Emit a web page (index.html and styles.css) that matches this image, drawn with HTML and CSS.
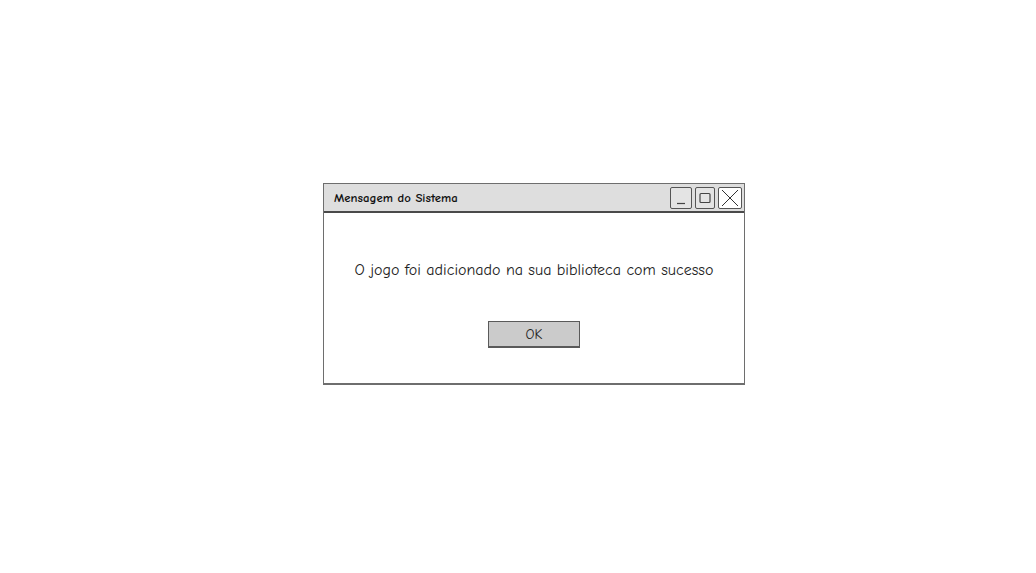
FILE: index.html
```html
<!DOCTYPE html>
<html lang="pt">
<head>
    <meta charset="UTF-8">
    <title>Mensagem do Sistema</title>
    <link rel="stylesheet" href="styles.css">
</head>
<body>
    <div class="stage">
        <div class="dialog">
            <div class="titlebar">
                <span class="title">Mensagem do Sistema</span>
                <div class="controls">
                    <span class="ctl ctl-min">
                        <svg width="20" height="20" viewBox="0 0 20 20"><path d="M6 15.5h8" stroke="#444" stroke-width="1.2" fill="none"/></svg>
                    </span>
                    <span class="ctl ctl-max">
                        <svg width="18" height="20" viewBox="0 0 18 20"><rect x="4" y="5.5" width="10" height="9" rx="1" stroke="#444" stroke-width="1.2" fill="none"/></svg>
                    </span>
                    <span class="ctl ctl-close">
                        <svg width="22" height="20" viewBox="0 0 22 20"><path d="M3 2l16 16M19 2L3 18" stroke="#333" stroke-width="1" fill="none"/></svg>
                    </span>
                </div>
            </div>
            <div class="body">
                <p class="message">O jogo foi adicionado na sua biblioteca com sucesso</p>
                <button class="ok">OK</button>
            </div>
        </div>
    </div>
</body>
</html>
```

FILE: styles.css
```css
body {
    margin: 0;
    background: #fff;
    font-family: "Comic Sans MS", "Comic Neue", "Open Sans", sans-serif;
    color: #222;
}
.stage {
    width: 1036px;
    height: 573px;
    padding-top: 183px;
    box-sizing: border-box;
}
.dialog {
    width: 422px;
    height: 202px;
    margin-left: 323px;
    border: 1px solid #6e6e6e;
    border-bottom-width: 2px;
    box-sizing: border-box;
    background: #fff;
}
.titlebar {
    height: 29px;
    background: #dedede;
    border-bottom: 2px solid #4a4a4a;
    display: flex;
    align-items: center;
    justify-content: space-between;
    padding: 0 2px 0 10px;
    box-sizing: border-box;
}
.title {
    font-size: 12.8px;
    font-weight: 600;
    color: #111;
}
.controls {
    display: flex;
    gap: 3px;
    padding-top: 1px;
}
.ctl {
    display: block;
    height: 20px;
    border: 1px solid #555;
    border-radius: 2px;
    background: #e4e4e4;
}
.ctl svg {
    display: block;
}
.ctl-min { width: 20px; }
.ctl-max { width: 18px; }
.ctl-close { width: 22px; background: #fff; }
.body {
    display: flex;
    flex-direction: column;
    align-items: center;
}
.message {
    margin: 47px 0 0;
    font-size: 16px;
    line-height: 20px;
    color: #222;
}
.ok {
    margin-top: 41px;
    width: 92px;
    height: 27px;
    background: #cbcbcb;
    border: 1px solid #5a5a5a;
    border-bottom-width: 2px;
    font-family: inherit;
    font-size: 14px;
    color: #222;
    padding: 0;
}
```
